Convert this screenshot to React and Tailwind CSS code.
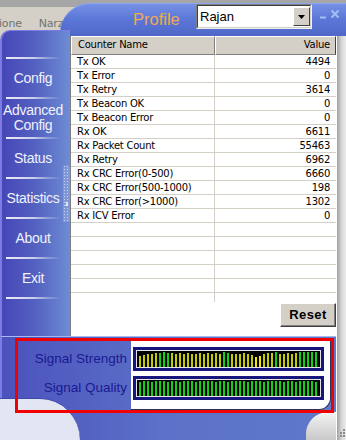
const rows = [
  ['Tx OK', '4494'],
  ['Tx Error', '0'],
  ['Tx Retry', '3614'],
  ['Tx Beacon OK', '0'],
  ['Tx Beacon Error', '0'],
  ['Rx OK', '6611'],
  ['Rx Packet Count', '55463'],
  ['Rx Retry', '6962'],
  ['Rx CRC Error(0-500)', '6660'],
  ['Rx CRC Error(500-1000)', '198'],
  ['Rx CRC Error(>1000)', '1302'],
  ['Rx ICV Error', '0'],
  ['', ''], ['', ''], ['', ''], ['', ''], ['', ''],
]

const menu = [['Config'], ['Advanced', 'Config'], ['Status'], ['Statistics'], ['About'], ['Exit']]

const barColor = { y: 'bg-[#c4cc00]', Y: 'bg-[#f2ea00]', g: 'bg-[#12d012]' }

const strength = '11y12y13y13y14y14g15g14g14y13y14y13y14y13y13y14y13y14y13y14y13y15g14g13y13y13y14y13y12y10Y11Y13y14y14y15g13y13y14y13y14y15g15g15g15g15g'
  .match(/\d+[a-zA-Z]/g)
  .map(s => [parseInt(s), s.slice(-1)])

const quality = [14, 15, 15, 14, 15, 15, 15, 14, 15, 15, 14, 15, 15, 15, 14, 15, 15, 15, 15, 14, 15, 15, 14, 15, 15, 15, 15, 14, 15, 15, 15, 14, 15, 15, 15, 15, 14, 15, 15, 14, 15, 15, 15, 15, 14]
  .map(h => [h, 'g'])

function Meter({ bars }) {
  return (
    <div className="h-[24px] w-[191px] border-[3px] border-[#16167c]">
      <div className="h-full border border-[#e4e4e4] bg-black flex items-end gap-[2px] pl-[2px] overflow-hidden">
        {bars.map(([h, c], i) => (
          <div key={i} className={`w-[2px] shrink-0 ${barColor[c]}`} style={{ height: h }} />
        ))}
      </div>
    </div>
  )
}

export default function App() {
  return (
    <div className="w-[346px] h-[440px] overflow-hidden flex flex-col bg-[#d4d0c8] font-['Liberation_Sans',Arial,sans-serif]">
      {/* menubar behind + skin header */}
      <div className="relative h-[36px] shrink-0">
        <div className="h-[7px] bg-[#a6a6a6]" />
        <div className="flex gap-[17px] mt-[9px] text-[11px] text-[#707070] font-['DejaVu_Sans',sans-serif] tracking-[-0.2px]">
          <span className="-ml-[1px]">ione</span>
          <span>Narzędzia</span>
        </div>
        <div className="absolute left-[60px] right-0 top-[3px] bottom-0 rounded-tl-[30px] bg-gradient-to-b from-[#7590e6] via-[#5a76d6] to-[#4f68c8] border-t border-[#8ea6f0] flex items-start">
          <span className="ml-[73px] w-[63px] mt-[5px] text-[16.5px] leading-[20px] text-[#f4a850]">Profile</span>
          <div className="w-[116px] h-[25px] bg-white border border-t-[#808080] border-l-[#808080] border-b-[#f0f0f0] border-r-[#f0f0f0] flex items-center">
            <div className="flex-1 h-full border border-t-[#404040] border-l-[#404040] border-b-[#d4d0c8] border-r-[#d4d0c8] flex items-center">
              <span className="flex-1 pl-[2px] text-[13px] text-black">Rajan</span>
              <div className="w-[17px] h-[19px] bg-[#d4d0c8] border border-t-white border-l-white border-b-[#404040] border-r-[#404040] flex items-center justify-center">
                <svg width="7" height="4" viewBox="0 0 7 4"><path d="M0 0h7L3.5 4z" fill="#000" /></svg>
              </div>
            </div>
          </div>
          <svg className="ml-[7px] mt-[9px]" width="8" height="8" viewBox="0 0 8 8">
            <path d="M1 4.5h6" stroke="#a4bef2" strokeWidth="2" />
          </svg>
          <svg className="ml-[3px] mt-[5px]" width="10" height="10" viewBox="0 0 10 10">
            <path d="M1.5 1.5l7 7M8.5 1.5l-7 7" stroke="#a4bef2" strokeWidth="2" />
          </svg>
        </div>
      </div>

      {/* body: sidebar + counter table */}
      <div className="relative flex h-[306px] -mt-[6px] shrink-0">
        <div className="relative w-[70px] rounded-tl-[10px] border-l-[2px] border-t border-[#7c7ce2] bg-gradient-to-r from-[#4646b6] via-[#5462c0] to-[#6e8cd4] flex flex-col pt-[26px] text-[14px] tracking-[-0.3px] text-[#f0f2ff]">
          {menu.map((m, i) => (
            <div key={i}>
              <div className="h-[2px] ml-[4px] w-[54px] bg-gradient-to-r from-white/90 via-white/70 to-white/0" />
              <div className="h-[38px] w-[62px] flex flex-col items-center justify-center leading-[15px]">
                {m.map(t => <span key={t}>{t}</span>)}
              </div>
            </div>
          ))}
          <div className="h-[2px] ml-[4px] w-[54px] bg-gradient-to-r from-white/90 via-white/70 to-white/0" />
          <div className="absolute right-0 top-[134px] w-[7px] h-[57px] rounded-t-[4px] bg-[#8198d8] bg-[radial-gradient(circle,#c6d2f4_0.8px,transparent_1px)] bg-[length:3px_3px] flex items-end justify-center pb-[14px]">
            <span className="text-[11px] leading-[10px] text-white font-bold">›</span>
          </div>
        </div>

        <div className="w-[266px] pt-[6px] flex flex-col">
          <div className="flex-1 bg-white border-l border-[#808080] flex flex-col font-['DejaVu_Sans',sans-serif] text-[10px] tracking-[-0.25px] text-black">
            <div className="flex h-[19px] bg-[#d4d0c8] shrink-0">
              <div className="w-[144px] border border-t-white border-l-white border-b-[#808080] border-r-[#808080] pl-[6px] leading-[16px]">Counter Name</div>
              <div className="flex-1 border border-t-white border-l-white border-b-[#808080] border-r-[#404040] pr-[5px] text-right leading-[16px]">Value</div>
            </div>
            {rows.map(([name, val], i) => (
              <div key={i} className="flex h-[14px] border-b border-[#d4d0c8] shrink-0">
                <div className="w-[144px] border-r border-[#d4d0c8] pl-[6px] leading-[13px]">{name}</div>
                <div className="flex-1 pr-[6px] text-right leading-[13px]">{val}</div>
              </div>
            ))}
            <div className="flex h-[9px] shrink-0">
              <div className="w-[144px] border-r border-[#d4d0c8]" />
            </div>
            <div className="flex justify-end">
              <button className="w-[56px] h-[24px] mt-[1px] bg-[#d4d0c8] border border-t-white border-l-white border-b-[#404040] border-r-[#404040] shadow-[inset_-1px_-1px_0_#808080] font-['Liberation_Sans',Arial,sans-serif] font-bold text-[13px] tracking-[0.4px] text-black">
                Reset
              </button>
            </div>
          </div>
        </div>

        <div className="w-[10px] pt-[6px] flex flex-col">
          <div className="flex-1 border-l border-white bg-gradient-to-r from-[#a0a0a0] via-[#d6d6d6] to-[#ececec]" />
        </div>
      </div>

      {/* signal section */}
      <div className="flex flex-1">
        <div className="relative w-[336px] border-l-[2px] border-[#7c7ce2] border-t border-t-[#a8b8ee] bg-gradient-to-r from-[#4c52bc] via-[#5c72c8] to-[#5f78ca]">
          <div className="absolute -left-[2px] bottom-0 w-[80px] h-[42px] rounded-tr-[40px_42px] bg-[#e2e6f2] border-t border-[#3c4aa8]" />
          <div className="absolute right-0 bottom-0 w-[30px] h-[28px] rounded-tl-[22px] bg-gradient-to-b from-[#f4f4f4] to-[#c8c8c8]" />
          <div className="relative ml-[13px] mt-[1px] w-[319px] h-[75px] border-[3px] border-[#f00000] flex">
            <div className="w-[113px] flex flex-col pt-[6px] gap-[5px] pr-[4px] text-[13.5px] text-[#1a1a92]">
              <div className="h-[24px] flex items-center justify-end">Signal Strength</div>
              <div className="h-[25px] flex items-center justify-end">Signal Quality</div>
            </div>
            <div className="flex-1 bg-white rounded-br-[12px] border-b border-r border-[#30305a] flex flex-col pt-[6px] gap-[5px] pl-[2px]">
              <Meter bars={strength} />
              <Meter bars={quality} />
            </div>
          </div>
        </div>
        <div className="w-[10px] flex flex-col border-l border-white bg-gradient-to-r from-[#a0a0a0] via-[#d6d6d6] to-[#ececec]">
          <div className="flex-1" />
          <svg className="mb-[2px] ml-[1px]" width="8" height="10" viewBox="0 0 8 10">
            <g fill="#8a8a8a">
              <rect x="5" y="1" width="2" height="2" /><rect x="5" y="4" width="2" height="2" /><rect x="5" y="7" width="2" height="2" />
              <rect x="2" y="4" width="2" height="2" /><rect x="2" y="7" width="2" height="2" />
            </g>
          </svg>
        </div>
      </div>
    </div>
  )
}
